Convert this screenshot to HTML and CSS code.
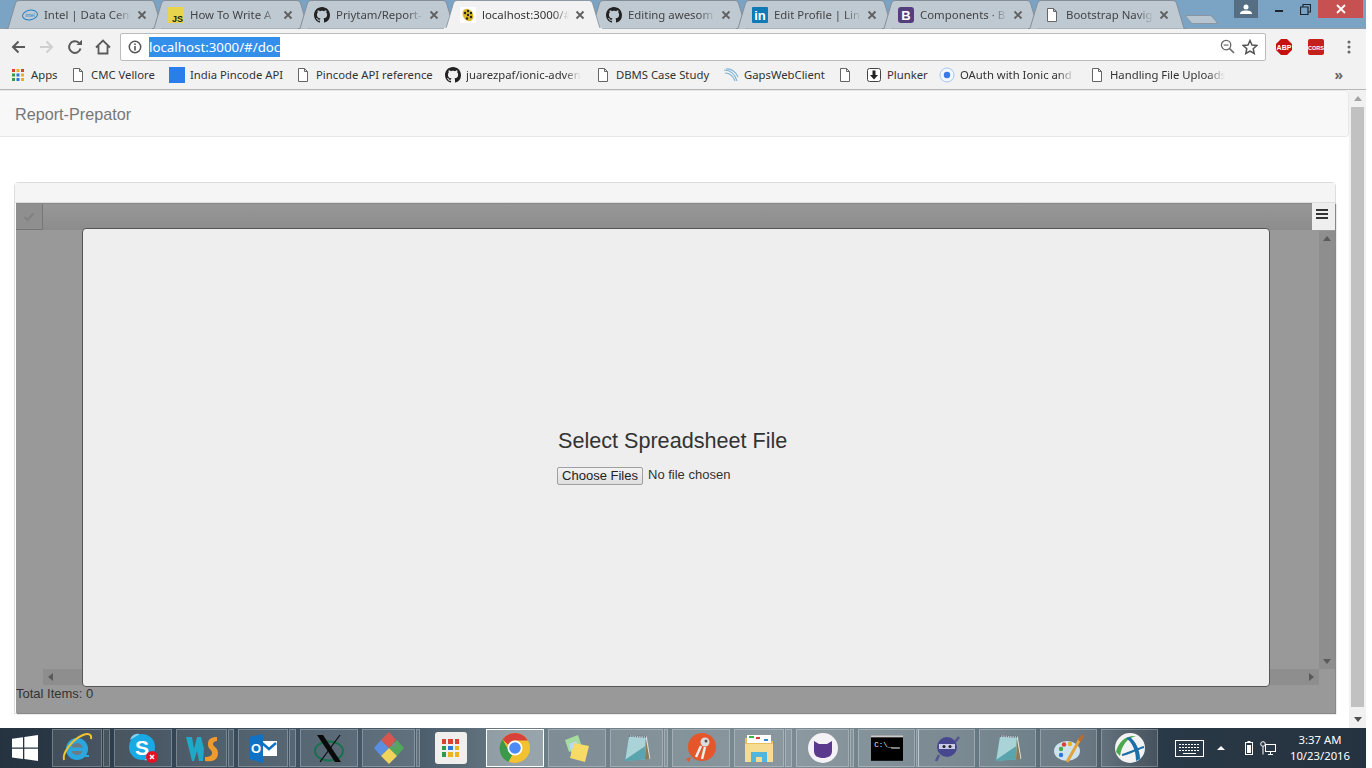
FILE: index.html
```html
<!DOCTYPE html>
<html>
<head>
    <title>Report-Prepator</title>
    <link rel="stylesheet" href="styles.css">
</head>
<body>
    <svg class="defs" width="0" height="0">
        <symbol id="i-github" viewBox="0 0 16 16"><path d="M8 0C3.58 0 0 3.58 0 8c0 3.54 2.29 6.53 5.47 7.59.4.07.55-.17.55-.38 0-.19-.01-.82-.01-1.49-2.01.37-2.53-.49-2.69-.94-.09-.23-.48-.94-.82-1.13-.28-.15-.68-.52-.01-.53.63-.01 1.08.58 1.23.82.72 1.21 1.87.87 2.33.66.07-.52.28-.87.51-1.07-1.78-.2-3.64-.89-3.64-3.95 0-.87.31-1.59.82-2.15-.08-.2-.36-1.02.08-2.12 0 0 .67-.21 2.2.82.64-.18 1.32-.27 2-.27.68 0 1.36.09 2 .27 1.53-1.04 2.2-.82 2.2-.82.44 1.1.16 1.92.08 2.12.51.56.82 1.27.82 2.15 0 3.07-1.87 3.75-3.65 3.95.29.25.54.73.54 1.48 0 1.07-.01 1.93-.01 2.2 0 .21.15.46.55.38A8.013 8.013 0 0016 8c0-4.42-3.58-8-8-8z" fill="#222"/></symbol>
        <symbol id="i-doc" viewBox="0 0 16 16"><path d="M3.5 1.5h6l3 3v10h-9z M9.5 1.5v3h3" fill="#fff" stroke="#666" stroke-width="1"/></symbol>
        <symbol id="i-close" viewBox="0 0 10 10"><path d="M1.500 1.500l7 7M8.500 1.500l-7 7" stroke="#606060" stroke-width="1.800"/></symbol>
        <symbol id="i-notepad" viewBox="0 0 36 36">
            <path d="M10 4l19 1 4 25-25 2z" fill="#dfe3e5"/>
            <path d="M9 5l19 1-1 25-23 2z" fill="#5aa4ad"/>
            <path d="M9 5l19 1-1 10-22 15z" fill="#a9d3d6"/>
            <path d="M28 7l4 23-5 1z" fill="#8a7b55"/>
            <path d="M9 4.500l19 1" stroke="#667" stroke-width="2" stroke-dasharray="1 1"/>
        </symbol>
    </svg>

    <div class="screen">
        <div class="tabstrip">
            <div class="tab">
                <svg class="favicon" viewBox="0 0 16 16"><ellipse cx="8" cy="8" rx="7.500" ry="4.800" fill="none" stroke="#1f7fc4" stroke-width="1" transform="rotate(-10 8 8)"/><text x="8" y="10" class="fav-intel">intel</text></svg>
                <span class="tab-title">Intel | Data Cent</span>
                <svg class="tab-close"><use href="#i-close"/></svg>
            </div>
            <div class="tab">
                <svg class="favicon" viewBox="0 0 16 16"><rect width="16" height="16" fill="#e9d44d"/><text x="15" y="15" class="fav-js">JS</text></svg>
                <span class="tab-title">How To Write A</span>
                <svg class="tab-close"><use href="#i-close"/></svg>
            </div>
            <div class="tab">
                <svg class="favicon"><use href="#i-github"/></svg>
                <span class="tab-title">Priytam/Report-</span>
                <svg class="tab-close"><use href="#i-close"/></svg>
            </div>
            <div class="tab tab-active">
                <svg class="favicon" viewBox="0 0 16 16"><rect width="16" height="16" fill="#fff"/><ellipse cx="8" cy="8" rx="5" ry="6.500" fill="#d9b92c" transform="rotate(-30 8 8)"/><circle cx="5" cy="6" r="1.200" fill="#222"/><circle cx="8" cy="4" r="1.200" fill="#222"/><circle cx="8" cy="8" r="1.200" fill="#222"/><circle cx="11" cy="6" r="1.200" fill="#222"/><circle cx="7" cy="11.500" r="1.200" fill="#222"/><circle cx="11" cy="10" r="1.200" fill="#222"/></svg>
                <span class="tab-title">localhost:3000/#</span>
                <svg class="tab-close"><use href="#i-close"/></svg>
            </div>
            <div class="tab">
                <svg class="favicon"><use href="#i-github"/></svg>
                <span class="tab-title">Editing awesom</span>
                <svg class="tab-close"><use href="#i-close"/></svg>
            </div>
            <div class="tab">
                <svg class="favicon" viewBox="0 0 16 16"><rect width="16" height="16" rx="1" fill="#0f7ab5"/><text x="8" y="13" class="fav-in">in</text></svg>
                <span class="tab-title">Edit Profile | Linl</span>
                <svg class="tab-close"><use href="#i-close"/></svg>
            </div>
            <div class="tab">
                <svg class="favicon" viewBox="0 0 16 16"><rect width="16" height="16" rx="3" fill="#563d7c"/><text x="8" y="13" class="fav-b">B</text></svg>
                <span class="tab-title">Components · B</span>
                <svg class="tab-close"><use href="#i-close"/></svg>
            </div>
            <div class="tab">
                <svg class="favicon"><use href="#i-doc"/></svg>
                <span class="tab-title">Bootstrap Navig</span>
                <svg class="tab-close"><use href="#i-close"/></svg>
            </div>
            <div class="new-tab"></div>
            <div class="window-controls">
                <div class="win-user">
                    <svg width="12" height="10" viewBox="0 0 12 10"><circle cx="6" cy="3" r="2.500" fill="#fff"/><path d="M0 10c0-3 3-3.500 6-3.500s6 .5 6 3.500z" fill="#fff"/></svg>
                </div>
                <div class="win-min"><span></span></div>
                <div class="win-max">
                    <svg width="11" height="11" viewBox="0 0 11 11"><path d="M.5 3h7.500v7.500H.5zM3 3V.5h7.500V8H8" fill="none" stroke="#1c2630" stroke-width="1.200"/></svg>
                </div>
                <div class="win-close">
                    <svg width="10" height="10" viewBox="0 0 10 10"><path d="M1 1l8 8M9 1l-8 8" stroke="#fff" stroke-width="1.800"/></svg>
                </div>
            </div>
        </div>

        <div class="toolbar">
            <svg class="tool tool-back" viewBox="0 0 16 16"><path d="M15 8H3M8.500 2.500L3 8l5.500 5.500" fill="none" stroke="#5a5a5a" stroke-width="2"/></svg>
            <svg class="tool tool-forward" viewBox="0 0 16 16"><path d="M1 8h12M7.500 2.500L13 8l-5.500 5.500" fill="none" stroke="#cfcfcf" stroke-width="2"/></svg>
            <svg class="tool tool-reload" viewBox="0 0 16 16"><path d="M13.500 9.500A5.800 5.800 0 1 1 12 4" fill="none" stroke="#5a5a5a" stroke-width="2"/><path d="M9.500 6H15V.8z" fill="#5a5a5a"/></svg>
            <svg class="tool tool-home" viewBox="0 0 16 16"><path d="M1 8.500L8 1.500l7 7M3.500 7v7.500h9V7" fill="none" stroke="#5a5a5a" stroke-width="1.800"/></svg>
            <div class="omnibox">
                <svg class="omni-info" viewBox="0 0 14 14"><circle cx="7" cy="7" r="5.700" fill="none" stroke="#555" stroke-width="1.500"/><path d="M7 6v4.500M7 3.500v1.500" stroke="#555" stroke-width="1.600"/></svg>
                <span class="omni-url">localhost:3000/#/doc</span>
                <svg class="omni-zoom" viewBox="0 0 16 16"><circle cx="6.500" cy="6.500" r="5" fill="none" stroke="#666" stroke-width="1.400"/><path d="M10 10l5 5" stroke="#666" stroke-width="1.600"/><path d="M4 6.500h5" stroke="#666" stroke-width="1.200"/></svg>
                <svg class="omni-star" viewBox="0 0 16 16"><path d="M8 1.500l2 4.500 4.800.5-3.600 3.200 1 4.800L8 12l-4.200 2.500 1-4.800L1.200 6.500 6 6z" fill="none" stroke="#555" stroke-width="1.500"/></svg>
            </div>
            <svg class="ext ext-abp" viewBox="0 0 16 16"><path d="M5 0h6l5 5v6l-5 5H5l-5-5V5z" fill="#c4100f"/><text x="8" y="10.500" class="ext-text">ABP</text></svg>
            <svg class="ext ext-cors" viewBox="0 0 16 16"><rect width="16" height="16" rx="2" fill="#c4201c"/><text x="8" y="10.500" class="ext-text ext-text-sm">CORS</text></svg>
            <svg class="tool-menu" viewBox="0 0 4 14"><circle cx="2" cy="2" r="1.500"/><circle cx="2" cy="7" r="1.500"/><circle cx="2" cy="12" r="1.500"/></svg>
        </div>

        <div class="bookmarks">
            <div class="bm">
                <svg class="bm-icon" viewBox="0 0 16 16"><g class="apps-dots"><rect x="2" y="2" width="3" height="3" fill="#d9442f"/><rect x="6.500" y="2" width="3" height="3" fill="#e8b11f"/><rect x="11" y="2" width="3" height="3" fill="#d9442f"/><rect x="2" y="6.500" width="3" height="3" fill="#3a9a4a"/><rect x="6.500" y="6.500" width="3" height="3" fill="#2c78d8"/><rect x="11" y="6.500" width="3" height="3" fill="#e8b11f"/><rect x="2" y="11" width="3" height="3" fill="#3a9a4a"/><rect x="6.500" y="11" width="3" height="3" fill="#2c78d8"/><rect x="11" y="11" width="3" height="3" fill="#e8b11f"/></g></svg>
                <span>Apps</span>
            </div>
            <div class="bm"><svg class="bm-icon"><use href="#i-doc"/></svg><span>CMC Vellore</span></div>
            <div class="bm"><svg class="bm-icon" viewBox="0 0 16 16"><rect width="16" height="16" fill="#2b7de9"/></svg><span>India Pincode API</span></div>
            <div class="bm"><svg class="bm-icon"><use href="#i-doc"/></svg><span>Pincode API reference</span></div>
            <div class="bm"><svg class="bm-icon"><use href="#i-github"/></svg><span class="bm-fade">juarezpaf/ionic-adven</span></div>
            <div class="bm"><svg class="bm-icon"><use href="#i-doc"/></svg><span>DBMS Case Study</span></div>
            <div class="bm"><svg class="bm-icon" viewBox="0 0 16 16"><path d="M1 3c6 0 11 4 13 11M2 6c4 0 8 3 10 8M3 2c5-1 10 3 12 8" fill="none" stroke="#7fb4d8" stroke-width="1.100"/></svg><span>GapsWebClient</span></div>
            <div class="bm"><svg class="bm-icon"><use href="#i-doc"/></svg></div>
            <div class="bm"><svg class="bm-icon" viewBox="0 0 16 16"><rect x="1.500" y="1.500" width="13" height="13" rx="2" fill="#fff" stroke="#444"/><path d="M6.500 3.500h3V8H12l-4 4.500L4 8h2.500z" fill="#222"/></svg><span>Plunker</span></div>
            <div class="bm"><svg class="bm-icon" viewBox="0 0 16 16"><circle cx="8" cy="8" r="7" fill="#f2f6fd" stroke="#a9c6f2"/><circle cx="8" cy="8" r="3.200" fill="#3b78e7"/></svg><span class="bm-fade">OAuth with Ionic and</span></div>
            <div class="bm"><svg class="bm-icon"><use href="#i-doc"/></svg><span class="bm-fade">Handling File Uploads</span></div>
            <div class="bm-more">»</div>
        </div>

        <div class="page">
            <div class="page-main">
                <nav class="navbar"><span class="brand">Report-Prepator</span></nav>

                <div class="panel">
                    <div class="panel-heading"></div>
                    <div class="grid-area">
                        <div class="grid-head">
                            <div class="check-cell">
                                <svg width="12" height="10" viewBox="0 0 12 10"><path d="M1.500 5l3 3 6-6.500" fill="none" stroke="#828282" stroke-width="2"/></svg>
                            </div>
                        </div>
                        <div class="grid-body"></div>
                        <div class="vscroll">
                            <span class="arrow arrow-up"></span>
                            <span class="arrow arrow-down"></span>
                        </div>
                        <div class="hscroll">
                            <span class="arrow arrow-left"></span>
                            <span class="arrow arrow-right"></span>
                        </div>
                        <div class="grid-footer">Total Items: 0</div>
                        <button class="menu-btn"><span></span><span></span><span></span></button>
                        <div class="modal">
                            <div class="upload">
                                <h3 class="upload-title">Select Spreadsheet File</h3>
                                <div class="upload-row">
                                    <button class="choose-btn">Choose Files</button>
                                    <span class="no-file">No file chosen</span>
                                </div>
                            </div>
                        </div>
                    </div>
                </div>
            </div>
            <div class="page-scroll">
                <span class="pg-arrow pg-arrow-up"></span>
                <div class="pg-thumb"></div>
                <span class="pg-arrow pg-arrow-down"></span>
            </div>
        </div>

        <div class="taskbar">
            <svg class="win-logo" viewBox="0 0 26 26"><path d="M0 3.700l11-1.500v10.300H0zM12.300 2L26 0v12.500H12.300zM0 13.700h11V24L0 22.500zM12.300 13.700H26V26l-13.700-2z" fill="#fff"/></svg>

            <div class="tb w50">
                <svg class="tb-icon" viewBox="0 0 32 32"><circle cx="16" cy="17" r="11" fill="#2ba7df"/><circle cx="16" cy="17" r="6" fill="#6b7a84"/><rect x="9" y="15.500" width="15" height="3.500" fill="#2ba7df"/><path d="M21 23h7v2h-7z" fill="#2ba7df"/><path d="M3 28C1 22 10 8 22 3c5-2 9-1 8 4" fill="none" stroke="#f0c22e" stroke-width="2"/></svg>
            </div>
            <div class="tb-stack w7"></div>
            <div class="tb w58">
                <svg class="tb-icon" viewBox="0 0 32 32"><circle cx="15" cy="15" r="13" fill="#19a9e5"/><path d="M3 8a8 8 0 0 1 10-6zM27 22a8 8 0 0 1-10 6z" fill="#7fd3f3"/><text x="15" y="22.500" class="tb-skype">S</text><circle cx="25" cy="25" r="6" fill="#e81123"/><path d="M23 23l4 4M27 23l-4 4" stroke="#fff" stroke-width="1.500"/></svg>
            </div>
            <div class="tb w51">
                <svg class="tb-icon" viewBox="0 0 32 32"><path d="M0 5h6l2 12 3-12h4l3 12-1 12h-4l-2-10-3 10H6z" fill="#20a8c8"/><path d="M31 5c-6 0-9 2-9 7 0 6 4 5 4 9 0 3-3 4-7 4v4c8 1 13-1 13-8 0-6-5-6-5-9 0-2 2-3 4-3z" fill="#ef9a2d"/></svg>
            </div>
            <div class="tb-stack w6"></div>
            <div class="tb w50">
                <svg class="tb-icon" viewBox="0 0 32 32"><rect x="14" y="9" width="16" height="15" fill="#fff"/><path d="M15 11l7 6 7-6" fill="none" stroke="#0f72c5" stroke-width="2.500"/><path d="M2 5l14-3v29L2 27z" fill="#0f72c5"/><text x="9" y="21" class="tb-outlook">O</text></svg>
            </div>
            <div class="tb-stack w7"></div>
            <div class="tb w58">
                <svg class="tb-icon" viewBox="0 0 32 32"><ellipse cx="16" cy="19" rx="14" ry="9.500" fill="none" stroke="#17714c" stroke-width="2"/><path d="M4 3h6l18 27h-6z" fill="#0a0a0a"/><path d="M27 3L7 30" stroke="#0a0a0a" stroke-width="1.200"/></svg>
            </div>
            <div class="tb w53">
                <svg class="tb-icon" viewBox="0 0 32 32"><path d="M16 16L8 8 1 16l7 8z" fill="#5b8fe0"/><path d="M16 16l-8-8 8-8 7 8z" fill="#d75650"/><path d="M16 16l8-8 7 8-7 8z" fill="#52a75c"/><path d="M16 16l8 8-8 8-8-8z" fill="#f0d45c"/><circle cx="21" cy="13" r="2" fill="#7b8a90"/></svg>
            </div>
            <div class="tb-stack w4"></div>
            <div class="tb-launcher">
                <div class="launcher-tile">
                    <span class="dot d-red"></span><span class="dot d-red"></span><span class="dot d-red"></span>
                    <span class="dot d-green"></span><span class="dot d-blue"></span><span class="dot d-yellow"></span>
                    <span class="dot d-green"></span><span class="dot d-yellow"></span><span class="dot d-yellow"></span>
                </div>
            </div>
            <div class="tb w58 tb-active">
                <svg class="tb-icon" viewBox="0 0 32 32"><circle cx="16" cy="16" r="15" fill="#f2c230"/><path d="M16 1a15 15 0 0 1 13 7.500H16a7.500 7.500 0 0 0-6.800 4.300L3.500 7.500A15 15 0 0 1 16 1z" fill="#d9423a"/><path d="M3.500 7.500l6.500 11.300 3 4.800L9.300 30A15 15 0 0 1 3.500 7.500z" fill="#3a9a4a"/><circle cx="16" cy="16" r="7.500" fill="#fff"/><circle cx="16" cy="16" r="5.800" fill="#4c8bf5"/></svg>
            </div>
            <div class="tb w58">
                <svg class="tb-icon" viewBox="0 0 32 32"><path d="M4 8l13-5 4 12-13 5z" fill="#a6dca0"/><path d="M8 12l7-3 4 11-8 3z" fill="#b9d9f2"/><path d="M13 11l15 3-4 16-15-4z" fill="#f6dc66"/></svg>
            </div>
            <div class="tb w53"><svg class="tb-icon"><use href="#i-notepad"/></svg></div>
            <div class="tb-stack w4"></div>
            <div class="tb w58">
                <svg class="tb-icon" viewBox="0 0 32 32"><circle cx="17" cy="15" r="14" fill="#e4572b"/><path d="M1 27l5-2-2 5z" fill="#e4572b"/><path d="M11 25l5-11M17 27l3-12" stroke="#eee" stroke-width="2.500"/><circle cx="20" cy="10" r="4.500" fill="#ddd"/><circle cx="21" cy="9" r="1.500" fill="#555"/></svg>
            </div>
            <div class="tb w50">
                <svg class="tb-icon" viewBox="0 0 32 32"><path d="M2 6h13l2 3h13v21H2z" fill="#e9bf5f"/><rect x="4" y="3" width="24" height="8" fill="#fff"/><rect x="6" y="4" width="5" height="2" fill="#3ab54a"/><rect x="13" y="5" width="4" height="2" fill="#d9423a"/><rect x="21" y="7" width="4" height="2" fill="#2c8ad8"/><path d="M2 12h28v18H2z" fill="#f6dc92"/><path d="M8 30V20h16v10h-5v-5h-6v5z" fill="#4fb6e0"/></svg>
            </div>
            <div class="tb-stack w7"></div>
            <div class="tb w53">
                <svg class="tb-icon" viewBox="0 0 32 32"><circle cx="16" cy="16" r="15" fill="#f4f2f6"/><path d="M7 9l5 3h8l5-3v10c0 5-4 7-9 7s-9-2-9-7z" fill="#5b3a8e"/></svg>
            </div>
            <div class="tb-stack w4"></div>
            <div class="tb w57">
                <svg class="tb-icon" viewBox="0 0 30 24"><rect width="30" height="24" fill="#000"/><rect width="30" height="2" fill="#ccc"/><text x="3" y="11" class="tb-cmd">C:\_</text><path d="M19 12h8" stroke="#eee"/></svg>
            </div>
            <div class="tb-stack w3 tb-tight"></div>
            <div class="tb w57 tb-tight">
                <svg class="tb-icon" viewBox="0 0 32 32"><circle cx="16" cy="15" r="10" fill="#47478f"/><path d="M8 12h16v5H8z" fill="#c9c9ea"/><circle cx="13" cy="14.500" r="1.500" fill="#222"/><circle cx="19" cy="14.500" r="1.500" fill="#222"/><path d="M24 10l4-5M8 23l-3 6" stroke="#54548f" stroke-width="2.500"/></svg>
            </div>
            <div class="tb w57"><svg class="tb-icon"><use href="#i-notepad"/></svg></div>
            <div class="tb w57">
                <svg class="tb-icon" viewBox="0 0 32 32"><ellipse cx="14" cy="19" rx="13" ry="10" fill="#cfe3ee"/><circle cx="8" cy="17" r="2.200" fill="#4aa84f"/><circle cx="11" cy="12.500" r="2.200" fill="#d9423a"/><circle cx="17" cy="12" r="2.200" fill="#e8b11f"/><circle cx="8" cy="23" r="2.200" fill="#2c78d8"/><path d="M14 30L27 7" stroke="#e2a23c" stroke-width="3"/><path d="M25 8l4-6 2 2-3 6z" fill="#b96a2c"/></svg>
            </div>
            <div class="tb w57">
                <svg class="tb-icon" viewBox="0 0 32 32"><circle cx="16" cy="16" r="15" fill="#f3f3f3"/><path d="M2 20C4 10 12 3 22 4 14 6 8 12 6 24z" fill="#4aa84f"/><path d="M12 6c6 4 10 12 10 23l4-2c0-10-5-18-10-22z" fill="#1c6fa8"/><path d="M8 23c6-1 15-6 22-8" fill="none" stroke="#1c6fa8" stroke-width="2"/></svg>
            </div>

            <div class="tray">
                <svg class="tray-kbd" width="29" height="17" viewBox="0 0 29 17"><rect x=".5" y=".5" width="28" height="16" fill="none" stroke="#fff"/><path d="M4 4.500h21M4 7.500h21M4 10.500h21" stroke="#fff" stroke-dasharray="2 1"/><path d="M8 13.500h13" stroke="#fff"/></svg>
                <span class="tray-caret"></span>
                <svg class="tray-batt" width="8" height="14" viewBox="0 0 8 14"><rect x=".5" y="1.500" width="7" height="12" fill="none" stroke="#fff"/><rect x="2.500" width="3" height="1.500" fill="#fff"/><rect x="2" y="4" width="4" height="8" fill="#fff"/></svg>
                <svg class="tray-net" width="16" height="15" viewBox="0 0 16 15"><rect x="5.500" y="3.500" width="10" height="7" fill="#2a3947" stroke="#fff"/><path d="M8 13.500h5M10.500 11v2" stroke="#fff"/><circle cx="3" cy="3" r="2.300" fill="#2a3947" stroke="#fff"/><path d="M3 5.500v8" stroke="#fff"/></svg>
                <div class="clock"><div>3:37 AM</div><div>10/23/2016</div></div>
            </div>
        </div>
    </div>
</body>
</html>
```

FILE: styles.css
```css
html, body {
    margin: 0;
    padding: 0;
    background: #fff;
}
.defs {
    position: absolute;
}
.screen {
    width: 1366px;
    height: 768px;
    overflow: hidden;
    display: flex;
    flex-direction: column;
    font-family: "Noto Sans", sans-serif;
    font-size: 11.5px;
    color: #333;
}

/* tabs */
.tabstrip {
    height: 28px;
    flex: none;
    display: flex;
    align-items: flex-start;
    padding-left: 6px;
    background: #7aa3c4;
    border-bottom: 1px solid #949ea7;
}
.tab {
    width: 158px;
    height: 29px;
    flex: none;
    box-sizing: border-box;
    margin-right: -12px;
    padding: 0 0 0 16px;
    display: flex;
    align-items: center;
    background: url("data:image/svg+xml,%3Csvg xmlns='http://www.w3.org/2000/svg' width='158' height='29'%3E%3Cpath d='M0 28.500H2L9.500 3Q10.200 .5 13 .5H145Q147.800 .5 148.500 3L156 28.500H158' fill='%23bfc9d2' stroke='%23838e98'/%3E%3C/svg%3E") no-repeat;
    color: #444;
    font-size: 11.4px;
}
.tab-active {
    position: relative;
    z-index: 2;
    background: url("data:image/svg+xml,%3Csvg xmlns='http://www.w3.org/2000/svg' width='158' height='29'%3E%3Cpath d='M0 28.500H2L9.500 3Q10.200 .5 13 .5H145Q147.800 .5 148.500 3L156 28.500H158V29H0Z' fill='%23f2f2f2' stroke='%23838e98' stroke-width='.8'/%3E%3Cpath d='M0 28.500H158' stroke='%23f2f2f2' stroke-width='1.500'/%3E%3C/svg%3E") no-repeat;
    color: #333;
}
.favicon {
    width: 16px;
    height: 16px;
    flex: none;
    margin-right: 6px;
}
.tab-title {
    width: 91px;
    flex: none;
    overflow: hidden;
    white-space: nowrap;
    -webkit-mask-image: linear-gradient(to right, #000 78%, transparent 96%);
    mask-image: linear-gradient(to right, #000 78%, transparent 96%);
}
.tab-close {
    width: 10px;
    height: 10px;
    flex: none;
    margin-left: 2px;
}
.fav-intel {
    font: 5px "Liberation Sans", sans-serif;
    fill: #1f7fc4;
    text-anchor: middle;
}
.fav-js {
    font: bold 9px "Liberation Sans", sans-serif;
    fill: #222;
    text-anchor: end;
}
.fav-in {
    font: bold 13px "Liberation Sans", sans-serif;
    fill: #fff;
    text-anchor: middle;
}
.fav-b {
    font: bold 13px "Liberation Sans", sans-serif;
    fill: #fff;
    text-anchor: middle;
}
.new-tab {
    width: 25px;
    height: 7px;
    flex: none;
    margin: 15px 0 0 14px;
    background: #b7c5d1;
    border: 1px solid #8a95a0;
    border-radius: 2px;
    transform: skewX(40deg);
}
.window-controls {
    margin-left: auto;
    display: flex;
    align-items: flex-start;
}
.win-user {
    width: 24px;
    height: 18px;
    margin-right: 8px;
    background: #556e83;
    display: flex;
    align-items: center;
    justify-content: center;
}
.win-min {
    width: 26px;
    height: 18px;
    display: flex;
    align-items: center;
    justify-content: center;
}
.win-min span {
    width: 8px;
    height: 2px;
    margin-top: 3px;
    background: #1c2630;
}
.win-max {
    width: 26px;
    height: 18px;
    display: flex;
    align-items: center;
    justify-content: center;
}
.win-close {
    width: 45px;
    height: 18px;
    margin-right: 3px;
    background: #c75050;
    display: flex;
    align-items: center;
    justify-content: center;
}

/* toolbar */
.toolbar {
    height: 33px;
    flex: none;
    box-sizing: border-box;
    padding-top: 2px;
    display: flex;
    align-items: center;
    background: #f2f2f2;
}
.tool {
    width: 16px;
    height: 16px;
    flex: none;
}
.tool-back {
    margin-left: 10px;
}
.tool-forward {
    margin-left: 13px;
}
.tool-reload {
    margin-left: 12px;
}
.tool-home {
    margin-left: 12px;
}
.omnibox {
    width: 1146px;
    height: 28px;
    flex: none;
    margin-left: 9px;
    box-sizing: border-box;
    border: 1px solid #bcbcbc;
    border-radius: 2px;
    background: #fff;
    display: flex;
    align-items: center;
}
.omni-info {
    width: 14px;
    height: 14px;
    margin-left: 7px;
    flex: none;
}
.omni-url {
    margin-left: 7px;
    background: #3390ea;
    color: #fff;
    font-size: 13.3px;
    line-height: 20px;
    white-space: nowrap;
}
.omni-zoom {
    width: 15px;
    height: 15px;
    margin-left: auto;
    flex: none;
}
.omni-star {
    width: 16px;
    height: 16px;
    margin: 0 7px 0 7px;
    flex: none;
}
.ext {
    width: 16px;
    height: 16px;
    flex: none;
}
.ext-abp {
    margin-left: 10px;
}
.ext-cors {
    margin-left: 16px;
}
.ext-text {
    font: bold 7px "Liberation Sans", sans-serif;
    fill: #fff;
    text-anchor: middle;
}
.ext-text-sm {
    font-size: 5.5px;
}
.tool-menu {
    width: 4px;
    height: 14px;
    flex: none;
    margin-left: 23px;
    fill: #666;
}

/* bookmarks */
.bookmarks {
    height: 28px;
    flex: none;
    box-sizing: border-box;
    padding: 0 0 2px 10px;
    display: grid;
    grid-template-columns: 60px 99px 126px 150px 150px 128px 114px 29px 73px 150px 150px 1fr;
    align-items: center;
    background: #f2f2f2;
    border-bottom: 1px solid #b6b6b6;
}
.bm {
    display: flex;
    align-items: center;
    white-space: nowrap;
    color: #333;
    font-size: 11.3px;
}
.bm-icon {
    width: 16px;
    height: 16px;
    flex: none;
    margin-right: 5px;
}
.bm-fade {
    width: 115px;
    overflow: hidden;
    -webkit-mask-image: linear-gradient(to right, #000 85%, transparent);
    mask-image: linear-gradient(to right, #000 85%, transparent);
}
.bm-more {
    justify-self: end;
    margin-right: 23px;
    font-size: 14px;
    font-weight: bold;
    color: #666;
}

/* page */
.page {
    flex: 1;
    min-height: 0;
    display: flex;
    background: #fff;
    font-family: "Liberation Sans", Arial, sans-serif;
}
.page-main {
    flex: 1;
    min-width: 0;
}
.navbar {
    height: 47px;
    box-sizing: border-box;
    display: flex;
    align-items: center;
    padding: 1px 0 0 15px;
    background: #f8f8f8;
    border: 1px solid #e7e7e7;
    border-left: 0;
    border-radius: 0 4px 4px 0;
}
.brand {
    color: #777;
    font-size: 16.2px;
}
.panel {
    width: 1322px;
    margin: 45px 0 0 14px;
    box-sizing: border-box;
    border: 1px solid #ddd;
    border-radius: 4px 4px 0 0;
}
.panel-heading {
    height: 19px;
    background: #f5f5f5;
    border-bottom: 1px solid #ddd;
}
.grid-area {
    position: relative;
    height: 510px;
    margin-left: 1px;
    background: #999;
    box-shadow: 1px 1px 1px #888;
    display: flex;
    flex-direction: column;
}
.grid-head {
    height: 26px;
    background: linear-gradient(#979797, #8c8c8c);
    border-top: 1px solid #8a8a8a;
    flex: none;
}
.check-cell {
    width: 27px;
    height: 26px;
    border-right: 1px solid #777;
    border-bottom: 1px solid #777;
    box-sizing: border-box;
    display: flex;
    align-items: center;
    justify-content: center;
    background: #8f8f8f;
}
.grid-body {
    flex: 1;
}
.vscroll {
    position: absolute;
    top: 28px;
    right: 0;
    width: 16px;
    height: 438px;
    background: #8e8e8e;
}
.hscroll {
    position: absolute;
    top: 466px;
    left: 27px;
    width: 1276px;
    height: 16px;
    background: #8e8e8e;
}
.arrow {
    position: absolute;
    width: 0;
    height: 0;
    border: 4px solid transparent;
}
.arrow-up {
    top: 5px;
    left: 4px;
    border-bottom: 5px solid #5a5a5a;
    border-top: 0;
}
.arrow-down {
    bottom: 5px;
    left: 4px;
    border-top: 5px solid #5a5a5a;
    border-bottom: 0;
}
.arrow-left {
    top: 4px;
    left: 5px;
    border-right: 5px solid #5a5a5a;
    border-left: 0;
}
.arrow-right {
    top: 4px;
    right: 5px;
    border-left: 5px solid #5a5a5a;
    border-right: 0;
}
.grid-footer {
    flex: none;
    height: 28px;
    color: #333;
    font-size: 13px;
    line-height: 18px;
}
.menu-btn {
    position: absolute;
    top: 0;
    right: 0;
    width: 23px;
    height: 27px;
    padding: 0 3px 5px 0;
    box-sizing: border-box;
    background: #eee;
    border: 0;
    display: flex;
    flex-direction: column;
    align-items: center;
    justify-content: center;
    gap: 2px;
}
.menu-btn span {
    width: 12px;
    height: 2px;
    background: #333;
}
.modal {
    position: absolute;
    top: 25px;
    left: 66px;
    width: 1188px;
    height: 459px;
    box-sizing: border-box;
    background: #eee;
    border: 1px solid #555;
    border-radius: 4px;
    display: flex;
    justify-content: center;
    align-items: center;
}
.upload {
    width: 238px;
    margin: -2px 0 0 0;
}
.upload-title {
    margin: 0 0 15px 1px;
    font-size: 21.6px;
    font-weight: normal;
    line-height: 23px;
    color: #333;
    white-space: nowrap;
}
.upload-row {
    display: flex;
    align-items: center;
}
.choose-btn {
    width: 86px;
    height: 18px;
    padding: 0;
    font: 13px "Liberation Sans", Arial, sans-serif;
    color: #222;
    background: linear-gradient(#f3f3f3, #dedede);
    border: 1px solid #a0a0a0;
    border-radius: 2px;
}
.no-file {
    margin: 0 0 2px 5px;
    font-size: 13px;
    color: #333;
}
.page-scroll {
    width: 17px;
    flex: none;
    background: #f1f1f1;
    display: flex;
    flex-direction: column;
    align-items: center;
}
.pg-arrow {
    flex: none;
    width: 0;
    height: 0;
    border: 4px solid transparent;
}
.pg-arrow-up {
    margin: 6px 0 6px;
    border-top: 0;
    border-bottom: 5px solid #a3a3a3;
}
.pg-arrow-down {
    margin: 10px 0 6px;
    border-bottom: 0;
    border-top: 5px solid #505050;
}
.pg-thumb {
    flex: 1;
    width: 13px;
    background: #c1c1c1;
}

/* taskbar */
.taskbar {
    height: 40px;
    flex: none;
    display: flex;
    align-items: center;
    background: linear-gradient(to right, #25323f 0, #3b4d5c 250px, #4c5e6c 420px, #6b7c86 520px, #7b8a92 800px, #63757f 1000px, #546570 1090px, #2a3947 1162px, #25323f 1366px);
}
.win-logo {
    width: 26px;
    height: 26px;
    flex: none;
    margin: 0 14px 0 12px;
}
.tb {
    height: 38px;
    flex: none;
    box-sizing: border-box;
    margin-left: 4px;
    background: rgba(255, 255, 255, 0.12);
    border: 1px solid rgba(255, 255, 255, 0.25);
    display: flex;
    align-items: center;
    justify-content: center;
}
.win-logo + .tb {
    margin-left: 0;
}
.tb-active {
    background: rgba(255, 255, 255, 0.3);
    border-color: #fff;
}
.tb-tight {
    margin-left: 0;
}
.w50 { width: 50px; }
.w51 { width: 51px; }
.w53 { width: 53px; }
.w57 { width: 57px; }
.w58 { width: 58px; }
.tb-icon {
    width: 32px;
    height: 32px;
    flex: none;
}
.tb-stack {
    height: 38px;
    flex: none;
    box-sizing: border-box;
    margin-left: 1px;
    background: rgba(255, 255, 255, 0.12);
    border: 1px solid rgba(255, 255, 255, 0.25);
}
.tb-stack.tb-tight {
    margin-left: 1px;
    margin-right: -1px;
}
.tb-stack.w3 { width: 3px; }
.tb-stack.w4 { width: 4px; }
.tb-stack.w6 { width: 6px; }
.tb-stack.w7 { width: 7px; }
.tb-launcher {
    width: 51px;
    height: 38px;
    flex: none;
    margin: 0 6px 0 5px;
    display: flex;
    align-items: center;
    justify-content: center;
}
.launcher-tile {
    width: 32px;
    height: 32px;
    box-sizing: border-box;
    padding: 7px;
    background: #f0efed;
    border-radius: 3px;
    display: grid;
    grid-template-columns: repeat(3, 1fr);
    gap: 2px;
}
.dot { display: block; }
.d-red { background: #d9442f; }
.d-green { background: #2f9a4a; }
.d-blue { background: #2c78d8; }
.d-yellow { background: #eeb11f; }
.tb-skype {
    font: bold 21px "Liberation Sans", sans-serif;
    fill: #fff;
    text-anchor: middle;
}
.tb-outlook {
    font: bold 13px "Liberation Sans", sans-serif;
    fill: #fff;
    text-anchor: middle;
}
.tb-cmd {
    font: 7px "Liberation Mono", monospace;
    fill: #eee;
}
.tray {
    flex: 1;
    display: flex;
    align-items: center;
    color: #fff;
}
.tray-kbd {
    margin-left: 17px;
    flex: none;
}
.tray-caret {
    width: 0;
    height: 0;
    margin-left: 13px;
    border: 4px solid transparent;
    border-top: 0;
    border-bottom: 4px solid #fff;
}
.tray-batt {
    margin-left: 20px;
    flex: none;
}
.tray-net {
    margin-left: 7px;
    flex: none;
}
.clock {
    width: 74px;
    margin-left: 7px;
    text-align: center;
    font-size: 11.3px;
    line-height: 16px;
}
```
